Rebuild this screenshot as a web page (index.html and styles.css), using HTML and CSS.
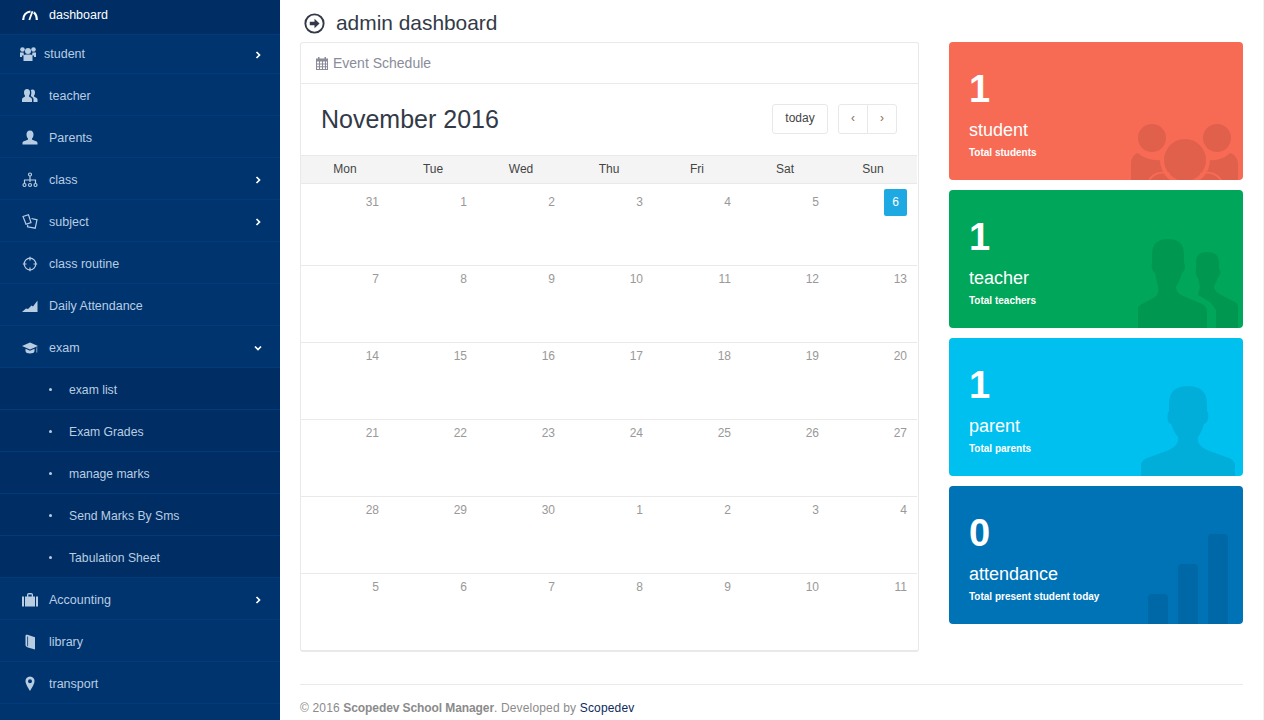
FILE: index.html
```html
<!DOCTYPE html>
<html lang="en">
<head>
<meta charset="utf-8">
<title>admin dashboard</title>
<link rel="stylesheet" href="styles.css">
</head>
<body>
<div class="app">
  <nav class="sidebar">
    <a class="row row-first active"><svg class="ico ico-gauge" viewBox="0 0 16 16"><path d="M1.200 13C1.200 8.500 4 5 8.500 4.500M11.800 5.300C13.800 6.800 14.800 9.500 14.800 13"/><path class="needle" d="M7.300 13L10.500 4.200"/></svg><span>dashboard</span></a>
    <a class="row row-student"><svg class="ico" viewBox="0 0 16 16"><circle cx="2.500" cy="3.500" r="2.300"/><circle cx="13.500" cy="3.500" r="2.300"/><circle cx="8" cy="5" r="3"/><path d="M0 6.500H3.500L4 9.500H2V11H0ZM12.500 6.500H16V11H14V9.500H12ZM3.500 10C3.500 8.800 5 8.500 8 8.500S12.500 8.800 12.500 10V15H3.500Z"/></svg><span>student</span><svg class="chev" viewBox="0 0 8 8"><path d="M2.500 1L5.500 4L2.500 7"/></svg></a>
    <a class="row"><svg class="ico" viewBox="0 0 16 16"><path d="M5 1C7 1 8 2.500 8 4.500C8 6 7.500 7 7 7.700V8.500C8.500 9.500 10 10 10 11.500V14H0V11.500C0 10 1.500 9.500 3 8.500V7.700C2.500 7 2 6 2 4.500C2 2.500 3 1 5 1ZM10.500 1.500C12.500 1.500 13 3 13 4.500C13 6 12.500 7 12 7.700V8.500C13.500 9.500 15.500 10 15.500 11.500V14H11.500V11C11.500 9.500 9.500 8.500 8.800 8.200L9 7C9.500 6 9.500 3.500 8.800 2C9.200 1.700 9.800 1.500 10.500 1.500Z"/></svg><span>teacher</span></a>
    <a class="row"><svg class="ico" viewBox="0 0 16 16"><path d="M8 .5C10.500 .5 11.500 2.500 11.500 4.500C11.500 6 11 7.500 10 8.500V9.500C12 10.800 15.500 11 15.500 13V14.500H.5V13C.5 11 4 10.800 6 9.500V8.500C5 7.500 4.500 6 4.500 4.500C4.500 2.500 5.500 .5 8 .5Z"/></svg><span>Parents</span></a>
    <a class="row"><svg class="ico ico-line" viewBox="0 0 16 16"><circle cx="8" cy="2.500" r="1.500"/><path d="M8 4V10M2.500 11.500V8H13.500V11.500"/><circle cx="2.500" cy="13" r="1.500"/><circle cx="8" cy="13" r="1.500"/><circle cx="13.500" cy="13" r="1.500"/></svg><span>class</span><svg class="chev" viewBox="0 0 8 8"><path d="M2.500 1L5.500 4L2.500 7"/></svg></a>
    <a class="row"><svg class="ico ico-line" viewBox="0 0 16 16"><path d="M1 2.500L6.500 .8L9 8.500L4 10.200ZM9.500 4.500L15 5.800L13.200 14.200L5.500 12.800L5.800 10.800"/></svg><span>subject</span><svg class="chev" viewBox="0 0 8 8"><path d="M2.500 1L5.500 4L2.500 7"/></svg></a>
    <a class="row"><svg class="ico ico-line" viewBox="0 0 16 16"><circle cx="8" cy="8" r="5.800"/><path d="M8 .8V4.500M8 11.500V15.200M.8 8H4.500M11.500 8H15.200"/></svg><span>class routine</span></a>
    <a class="row"><svg class="ico" viewBox="0 0 16 16"><path d="M0 14L4 10.500L6 11L9.500 7.500L11 8.500L15.500 2.500V14Z"/></svg><span>Daily Attendance</span></a>
    <a class="row"><svg class="ico" viewBox="0 0 16 16"><path d="M8 2.500L16 6L8 9.500L0 6ZM3.500 8.800L8 10.800L12.500 8.800V11C12.500 12.800 10 13.500 8 13.500S3.500 12.800 3.500 11ZM14.500 7.500L15.200 7.200V12.500H14.500Z"/></svg><span>exam</span><svg class="chev" viewBox="0 0 8 8"><path d="M1 2.500L4 5.500L7 2.500"/></svg></a>
    <a class="row sub"><span>exam list</span></a>
    <a class="row sub"><span>Exam Grades</span></a>
    <a class="row sub"><span>manage marks</span></a>
    <a class="row sub"><span>Send Marks By Sms</span></a>
    <a class="row sub"><span>Tabulation Sheet</span></a>
    <a class="row"><svg class="ico" viewBox="0 0 16 16"><path d="M0 4.500H2V14.500H0ZM3 4.500H5V2.800C5 1.800 5.800 1 6.800 1H9.200C10.200 1 11 1.800 11 2.800V4.500H13V14.500H3ZM6.300 4.500H9.700V2.400H6.300ZM14 4.500H16V14.500H14Z"/></svg><span>Accounting</span><svg class="chev" viewBox="0 0 8 8"><path d="M2.500 1L5.500 4L2.500 7"/></svg></a>
    <a class="row"><svg class="ico" viewBox="0 0 16 16"><path d="M3.500 1.800C3.500 .8 4.500 .4 5.500 .8L13 3.300V15.500L6 13.500C4.500 13 3.500 12 3.500 11Z"/><path class="ico-cut" d="M5.600 2.500V12.200"/></svg><span>library</span></a>
    <a class="row"><svg class="ico" viewBox="0 0 16 16"><path fill-rule="evenodd" d="M8 .5C11 .5 12.500 2.800 12.500 5C12.500 8 9.500 12.500 8 15C6.500 12.500 3.500 8 3.500 5C3.500 2.800 5 .5 8 .5ZM8 3.200A2 2 0 1 0 8 7.200A2 2 0 1 0 8 3.200Z"/></svg><span>transport</span></a>
  </nav>

  <main class="main">
    <header class="page-head">
      <svg class="head-ico" viewBox="0 0 20 20"><circle cx="10" cy="10" r="8.700"/><path class="head-arrow" d="M5.500 8.300H10V5.500L14.800 10L10 14.500V11.700H5.500Z"/></svg>
      <h1>admin dashboard</h1>
    </header>
    <div class="content">
      <section class="panel">
        <div class="panel-head">
          <svg class="cal-ico" viewBox="0 0 14 14"><path fill-rule="evenodd" d="M1 2.500H3V1H4.500V2.500H9.500V1H11V2.500H13V14H1ZM2 5.500V7.500H4V5.500ZM5 5.500V7.500H7V5.500ZM8 5.500V7.500H10V5.500ZM11 5.500V7.500H12V5.500ZM2 8.500V10.300H4V8.500ZM5 8.500V10.300H7V8.500ZM8 8.500V10.300H10V8.500ZM11 8.500V10.300H12V8.500ZM2 11.200V13H4V11.200ZM5 11.200V13H7V11.200ZM8 11.200V13H10V11.200ZM11 11.200V13H12V11.200Z"/></svg>
          <span>Event Schedule</span>
        </div>
        <div class="toolbar">
          <h2>November 2016</h2>
          <div class="tools">
            <button class="btn btn-today" type="button">today</button>
            <div class="btn-group">
              <button class="btn btn-nav" type="button">‹</button>
              <button class="btn btn-nav" type="button">›</button>
            </div>
          </div>
        </div>
        <div class="cal">
          <div class="dow"><span>Mon</span><span>Tue</span><span>Wed</span><span>Thu</span><span>Fri</span><span>Sat</span><span>Sun</span></div>
          <div class="week week-first"><span class="num">31</span><span class="num">1</span><span class="num">2</span><span class="num">3</span><span class="num">4</span><span class="num">5</span><span class="num"><b class="today">6</b></span></div>
          <div class="week"><span class="num">7</span><span class="num">8</span><span class="num">9</span><span class="num">10</span><span class="num">11</span><span class="num">12</span><span class="num">13</span></div>
          <div class="week"><span class="num">14</span><span class="num">15</span><span class="num">16</span><span class="num">17</span><span class="num">18</span><span class="num">19</span><span class="num">20</span></div>
          <div class="week"><span class="num">21</span><span class="num">22</span><span class="num">23</span><span class="num">24</span><span class="num">25</span><span class="num">26</span><span class="num">27</span></div>
          <div class="week"><span class="num">28</span><span class="num">29</span><span class="num">30</span><span class="num">1</span><span class="num">2</span><span class="num">3</span><span class="num">4</span></div>
          <div class="week week-last"><span class="num">5</span><span class="num">6</span><span class="num">7</span><span class="num">8</span><span class="num">9</span><span class="num">10</span><span class="num">11</span></div>
        </div>
      </section>

      <aside class="cards">
        <div class="card card-red">
          <div class="card-num">1</div><div class="card-title">student</div><div class="card-sub">Total students</div>
          <svg class="card-art" viewBox="0 0 294 138"><path d="M182 138V122C182 116 185 112 189 111C194 116 204 119 212 118L260 118C268 119 276 116 281 111C285 112 289 116 289 122V138Z"/><circle cx="203" cy="96" r="14"/><circle cx="268" cy="96" r="14"/><circle class="gap-red" cx="236" cy="118" r="25"/><circle cx="236" cy="118" r="21"/><path class="gap-line-red" d="M200 138C205 131 213 129 221 132M251 132C259 129 267 131 272 138"/></svg>
        </div>
        <div class="card card-green">
          <div class="card-num">1</div><div class="card-title">teacher</div><div class="card-sub">Total teachers</div>
          <svg class="card-art" viewBox="0 0 294 138"><path d="M247 72C247 66 250 62 258 62C266 62 270 66 270 72V79C272 80 272 85 269 87C268 91 266 93 265 97C265 100 268 102 272 105L286 112C288 113 289 115 289 118V138H267V120L261 112L249 105L251 97L249 88C247 86 246 81 247 79Z"/><path d="M203 65C203 54 208 49 219 49C230 49 235 54 235 65V73C237 75 236 81 233 83C232 88 229 93 227 97C227 100 229 103 232 105L253 114C256 116 258 118 258 122V138H189V118C189 116 191 115 193 114L206 107C209 105 210 100 209 97C208 92 207 88 206 83C203 81 202 75 203 73Z"/></svg>
        </div>
        <div class="card card-cyan">
          <div class="card-num">1</div><div class="card-title">parent</div><div class="card-sub">Total parents</div>
          <svg class="card-art" viewBox="0 0 294 138"><path d="M220 66C220 54 226 48 239 48C252 48 258 54 258 66V73C260 75 260 82 257 85L255 86C254 91 251 96 249 99C248 105 252 109 258 112L280 120C284 122 286 124 286 127V138H192V127C192 124 194 122 198 120L220 112C226 109 230 105 229 99C226 96 224 91 222 86L220 85C218 82 218 75 220 73Z"/></svg>
        </div>
        <div class="card card-blue">
          <div class="card-num">0</div><div class="card-title">attendance</div><div class="card-sub">Total present student today</div>
          <svg class="card-art" viewBox="0 0 294 138"><path d="M199 112A4 4 0 0 1 203 108H215A4 4 0 0 1 219 112V138H199ZM229 82A4 4 0 0 1 233 78H245A4 4 0 0 1 249 82V138H229ZM259 52A4 4 0 0 1 263 48H275A4 4 0 0 1 279 52V138H259Z"/></svg>
        </div>
      </aside>
    </div>
    <footer class="foot">© 2016 <strong>Scopedev School Manager</strong>. Developed by <a class="foot-link">Scopedev</a></footer>
  </main>
</div>
</body>
</html>
```
FILE: styles.css
```css
* { box-sizing: border-box; }
html, body { margin: 0; padding: 0; height: 720px; overflow: hidden; background: #fff; }
body { font-family: "Liberation Sans", Arial, sans-serif; font-size: 12px; color: #333; }
.app { display: flex; height: 720px; overflow: hidden; }

.sidebar { flex: 0 0 280px; background: #00346f; display: flex; flex-direction: column; overflow: hidden; }
.row { flex: 0 0 42px; display: flex; align-items: center; padding: 2px 18px 0 22px; border-bottom: 1px solid #003c7c; color: #b9cde2; font-size: 12.5px; }
.row > span { margin-left: 11px; }
.row-first { flex-basis: 35px; padding-top: 0; padding-bottom: 5px; }
.row-student { flex-basis: 39px; padding-top: 0; padding-left: 20px; }
.row-student > span { margin-left: 8px; }
.row-student .chev { margin-top: 2px; }
.active { background: #002d63; color: #fff; }
.ico { flex: 0 0 16px; width: 16px; height: 16px; fill: #b9cde2; }
.ico-line { fill: none; stroke: #b9cde2; stroke-width: 1.200; }
.ico-gauge { fill: none; stroke: #fff; stroke-width: 2.200; }
.needle { stroke-width: 1.800; }
.ico-cut { fill: none; stroke: #00346f; stroke-width: .8; }
.chev { width: 8px; height: 8px; margin-left: auto; fill: none; stroke: #fff; stroke-width: 1.700; }
.sub { background: #002d63; padding-left: 49px; font-size: 12.200px; }
.sub::before { content: ""; width: 3px; height: 3px; border-radius: 50%; background: #b9cde2; }
.sub > span { margin-left: 17px; }

.main { flex: 1; padding: 0 20px; border-right: 1px solid #f2f2f2; display: flex; flex-direction: column; }
.page-head { flex: 0 0 42px; display: flex; align-items: center; padding: 4px 0 0 4px; }
.page-head h1 { margin: 0 0 0 11px; font-size: 20.900px; font-weight: 400; color: #333a47; }
.head-ico { width: 21px; height: 21px; fill: none; stroke: #333a47; stroke-width: 1.800; }
.head-arrow { fill: #333a47; stroke: none; }

.content { display: flex; gap: 30px; align-items: flex-start; }
.panel { flex: 0 0 619px; height: 610px; border: 1px solid #e9e9e9; border-bottom-width: 2px; border-radius: 3px; display: flex; flex-direction: column; }
.panel-head { flex: 0 0 41px; display: flex; align-items: center; padding-left: 14px; border-bottom: 1px solid #e9e9e9; color: #8a8c9a; font-size: 14px; }
.cal-ico { width: 14px; height: 14px; fill: #8a8c9a; margin-right: 4px; }
.toolbar { flex: 0 0 71px; display: flex; align-items: center; justify-content: space-between; padding: 0 21px 1px 20px; }
.toolbar h2 { margin: 0; font-size: 25px; font-weight: 400; color: #333a47; }
.tools { display: flex; gap: 10px; }
.btn { height: 30px; background: #fff; border: 1px solid #e8e8e8; color: #444; font: 12px "Liberation Sans", Arial, sans-serif; padding: 0 0 2px; }
.btn-today { width: 56px; border-radius: 3px; }
.btn-group { display: flex; }
.btn-nav { width: 30px; color: #8a6d55; }
.btn-nav:first-child { border-radius: 3px 0 0 3px; }
.btn-nav:last-child { margin-left: -1px; border-radius: 0 3px 3px 0; }

.cal { flex: 1; display: flex; flex-direction: column; padding-right: 1px; }
.dow { flex: 0 0 29px; display: grid; grid-template-columns: repeat(7, 1fr); align-items: center; padding-bottom: 2px; background: #f4f4f4; border-top: 1px solid #e9e9e9; border-bottom: 1px solid #e9e9e9; text-align: center; color: #444; }
.week { flex: 0 0 77px; display: grid; grid-template-columns: repeat(7, 1fr); border-bottom: 1px solid #e9e9e9; }
.week-first { flex-basis: 82px; }
.week-first .num { padding-top: 5px; line-height: 27px; }
.week-last { flex: 1; border-bottom: 0; }
.num { display: block; text-align: right; padding: 6px 10px; line-height: 14px; color: #999; }
.today { display: inline-block; width: 23px; height: 27px; text-align: center; background: #1fa9e3; border-radius: 2px; color: #fff; font-weight: 400; }

.cards { flex: 0 0 294px; display: flex; flex-direction: column; gap: 10px; }
.card { position: relative; height: 138px; border-radius: 4px; overflow: hidden; padding: 26px 20px 0; color: #fff; }
.card-red { background: #f76a54; }
.card-green { background: #00a65a; }
.card-cyan { background: #00c0ef; }
.card-blue { background: #0073b7; }
.card-num { font-size: 38px; font-weight: 700; line-height: 42px; }
.card-title { font-size: 18px; line-height: 22px; margin-top: 9px; }
.card-sub { font-size: 10px; font-weight: 700; line-height: 14px; margin-top: 5px; }
.card-art { position: absolute; inset: 0; width: 294px; height: 138px; fill: rgba(0, 0, 0, .09); }
.gap-red { fill: #f76a54; }
.gap-line-red { fill: none; stroke: #f76a54; stroke-width: 2; }

.foot { margin-top: 32px; border-top: 1px solid #e9e9e9; padding-top: 16px; color: #8b8b8b; font-size: 12px; letter-spacing: .16px; }
.foot strong { font-weight: 700; letter-spacing: -.09px; }
.foot-link { color: #0b2a5c; }
```
